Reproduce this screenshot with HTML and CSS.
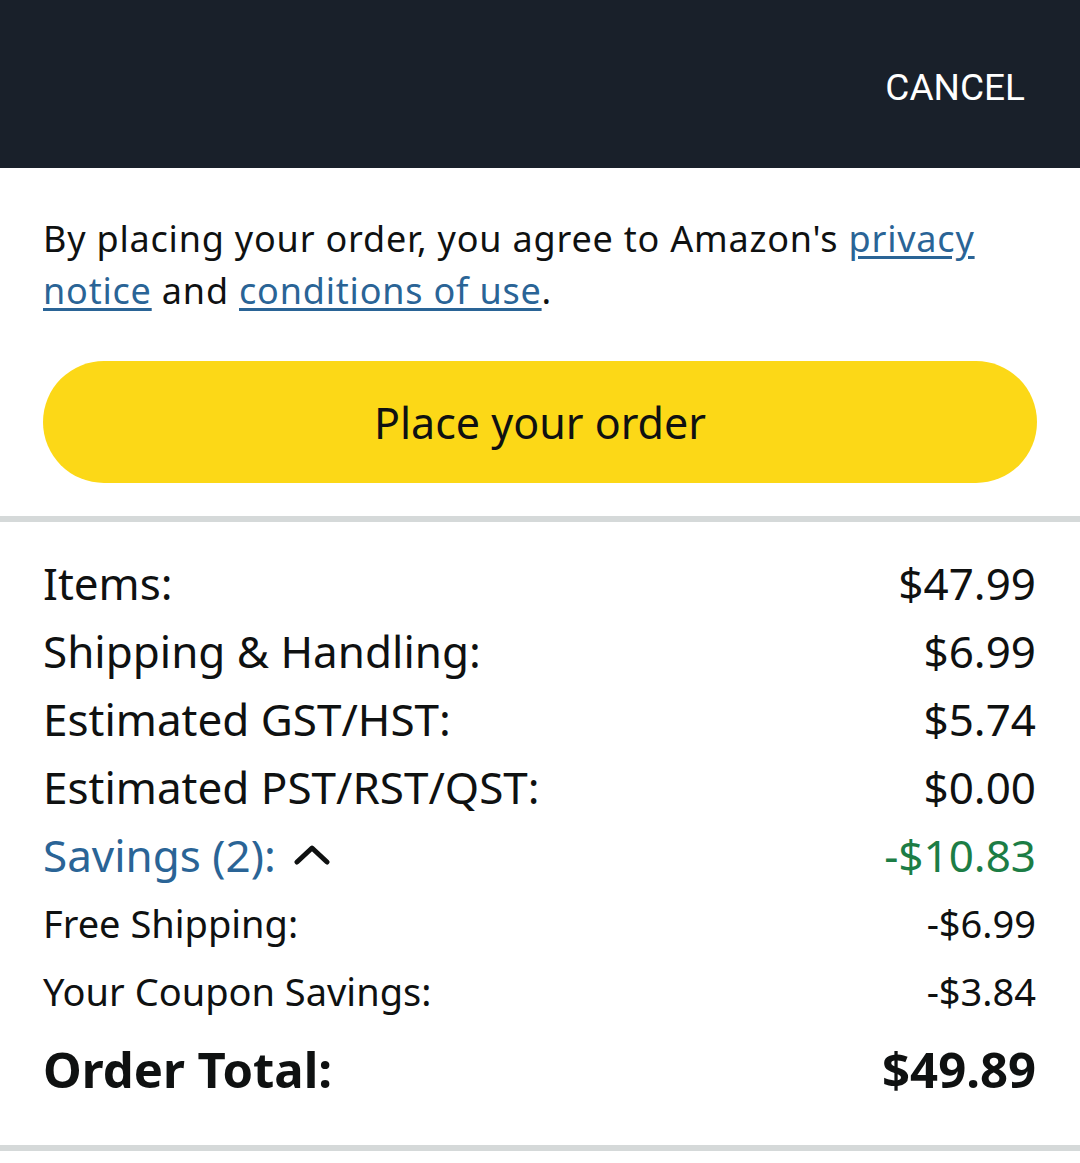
FILE: index.html
```html
<!DOCTYPE html>
<html lang="en">
<head>
  <meta charset="UTF-8" />
  <meta name="viewport" content="width=device-width, initial-scale=1.0" />
  <title>Place your order</title>
  <link rel="stylesheet" href="styles.css">
</head>
<body>
  <header class="topbar">
    <button class="cancel-btn" type="button">CANCEL</button>
  </header>

  <section class="consent">
    <p class="consent-text">
      By placing your order, you agree to Amazon's <a href="#">privacy</a>
      <a href="#">notice</a> and <a href="#">conditions of use</a>.
    </p>
    <button class="place-order" type="button">Place your order</button>
  </section>

  <section class="summary">
    <div class="row"><span>Items:</span><span>$47.99</span></div>
    <div class="row"><span>Shipping &amp; Handling:</span><span>$6.99</span></div>
    <div class="row"><span>Estimated GST/HST:</span><span>$5.74</span></div>
    <div class="row"><span>Estimated PST/RST/QST:</span><span>$0.00</span></div>
    <div class="row savings">
      <span class="savings-toggle">Savings (2):
        <svg class="chevron" width="36" height="22" viewBox="0 0 36 22">
          <polyline points="3,18 18,4 33,18" fill="none" stroke="#0f1111" stroke-width="5" stroke-linecap="round" stroke-linejoin="round"/>
        </svg>
      </span>
      <span class="green">-$10.83</span>
    </div>
    <div class="row sub"><span>Free Shipping:</span><span>-$6.99</span></div>
    <div class="row sub"><span>Your Coupon Savings:</span><span>-$3.84</span></div>
    <div class="row total"><span>Order Total:</span><span>$49.89</span></div>
  </section>
</body>
</html>
```

FILE: styles.css
```css
:root {
  --nav-bg: #19202a;
  --text: #0f1111;
  --link: #2a6496;
  --yellow: #fcd817;
  --divider: #d5d9d9;
  --green: #1c7d45;
}

body {
  margin: 0;
  background: #fff;
  color: var(--text);
  font-family: "Noto Sans", "Open Sans", sans-serif;
}

.topbar {
  height: 168px;
  box-sizing: border-box;
  background: var(--nav-bg);
  display: flex;
  justify-content: flex-end;
  align-items: center;
  padding: 6px 55px 0 0;
}

.cancel-btn {
  background: none;
  border: none;
  padding: 0;
  color: #fff;
  font-family: Roboto, sans-serif;
  font-size: 37px;
  cursor: pointer;
}

.consent {
  padding: 45px 43px 33px;
  border-bottom: 6px solid var(--divider);
}

.consent-text {
  margin: 0 0 44px;
  font-size: 36px;
  line-height: 52px;
  letter-spacing: 0.8px;
}

.consent-text a {
  color: var(--link);
  text-decoration: underline;
  text-underline-offset: 4px;
}

.place-order {
  display: block;
  width: 100%;
  height: 122px;
  padding: 0;
  border: none;
  border-radius: 61px;
  background: var(--yellow);
  color: var(--text);
  font-family: inherit;
  font-size: 43px;
  cursor: pointer;
}

.summary {
  padding: 27px 44px 36px 43px;
  border-bottom: 6px solid var(--divider);
}

.row {
  display: flex;
  justify-content: space-between;
  align-items: baseline;
  font-size: 44px;
  line-height: 68px;
}

.savings-toggle {
  color: var(--link);
  display: flex;
  align-items: center;
  gap: 18px;
}

.chevron {
  display: block;
}

.green {
  color: var(--green);
}

.row.sub {
  font-size: 38px;
}

.row.total {
  font-size: 49px;
  font-weight: 700;
  line-height: 80px;
  margin-top: 4px;
}
```
